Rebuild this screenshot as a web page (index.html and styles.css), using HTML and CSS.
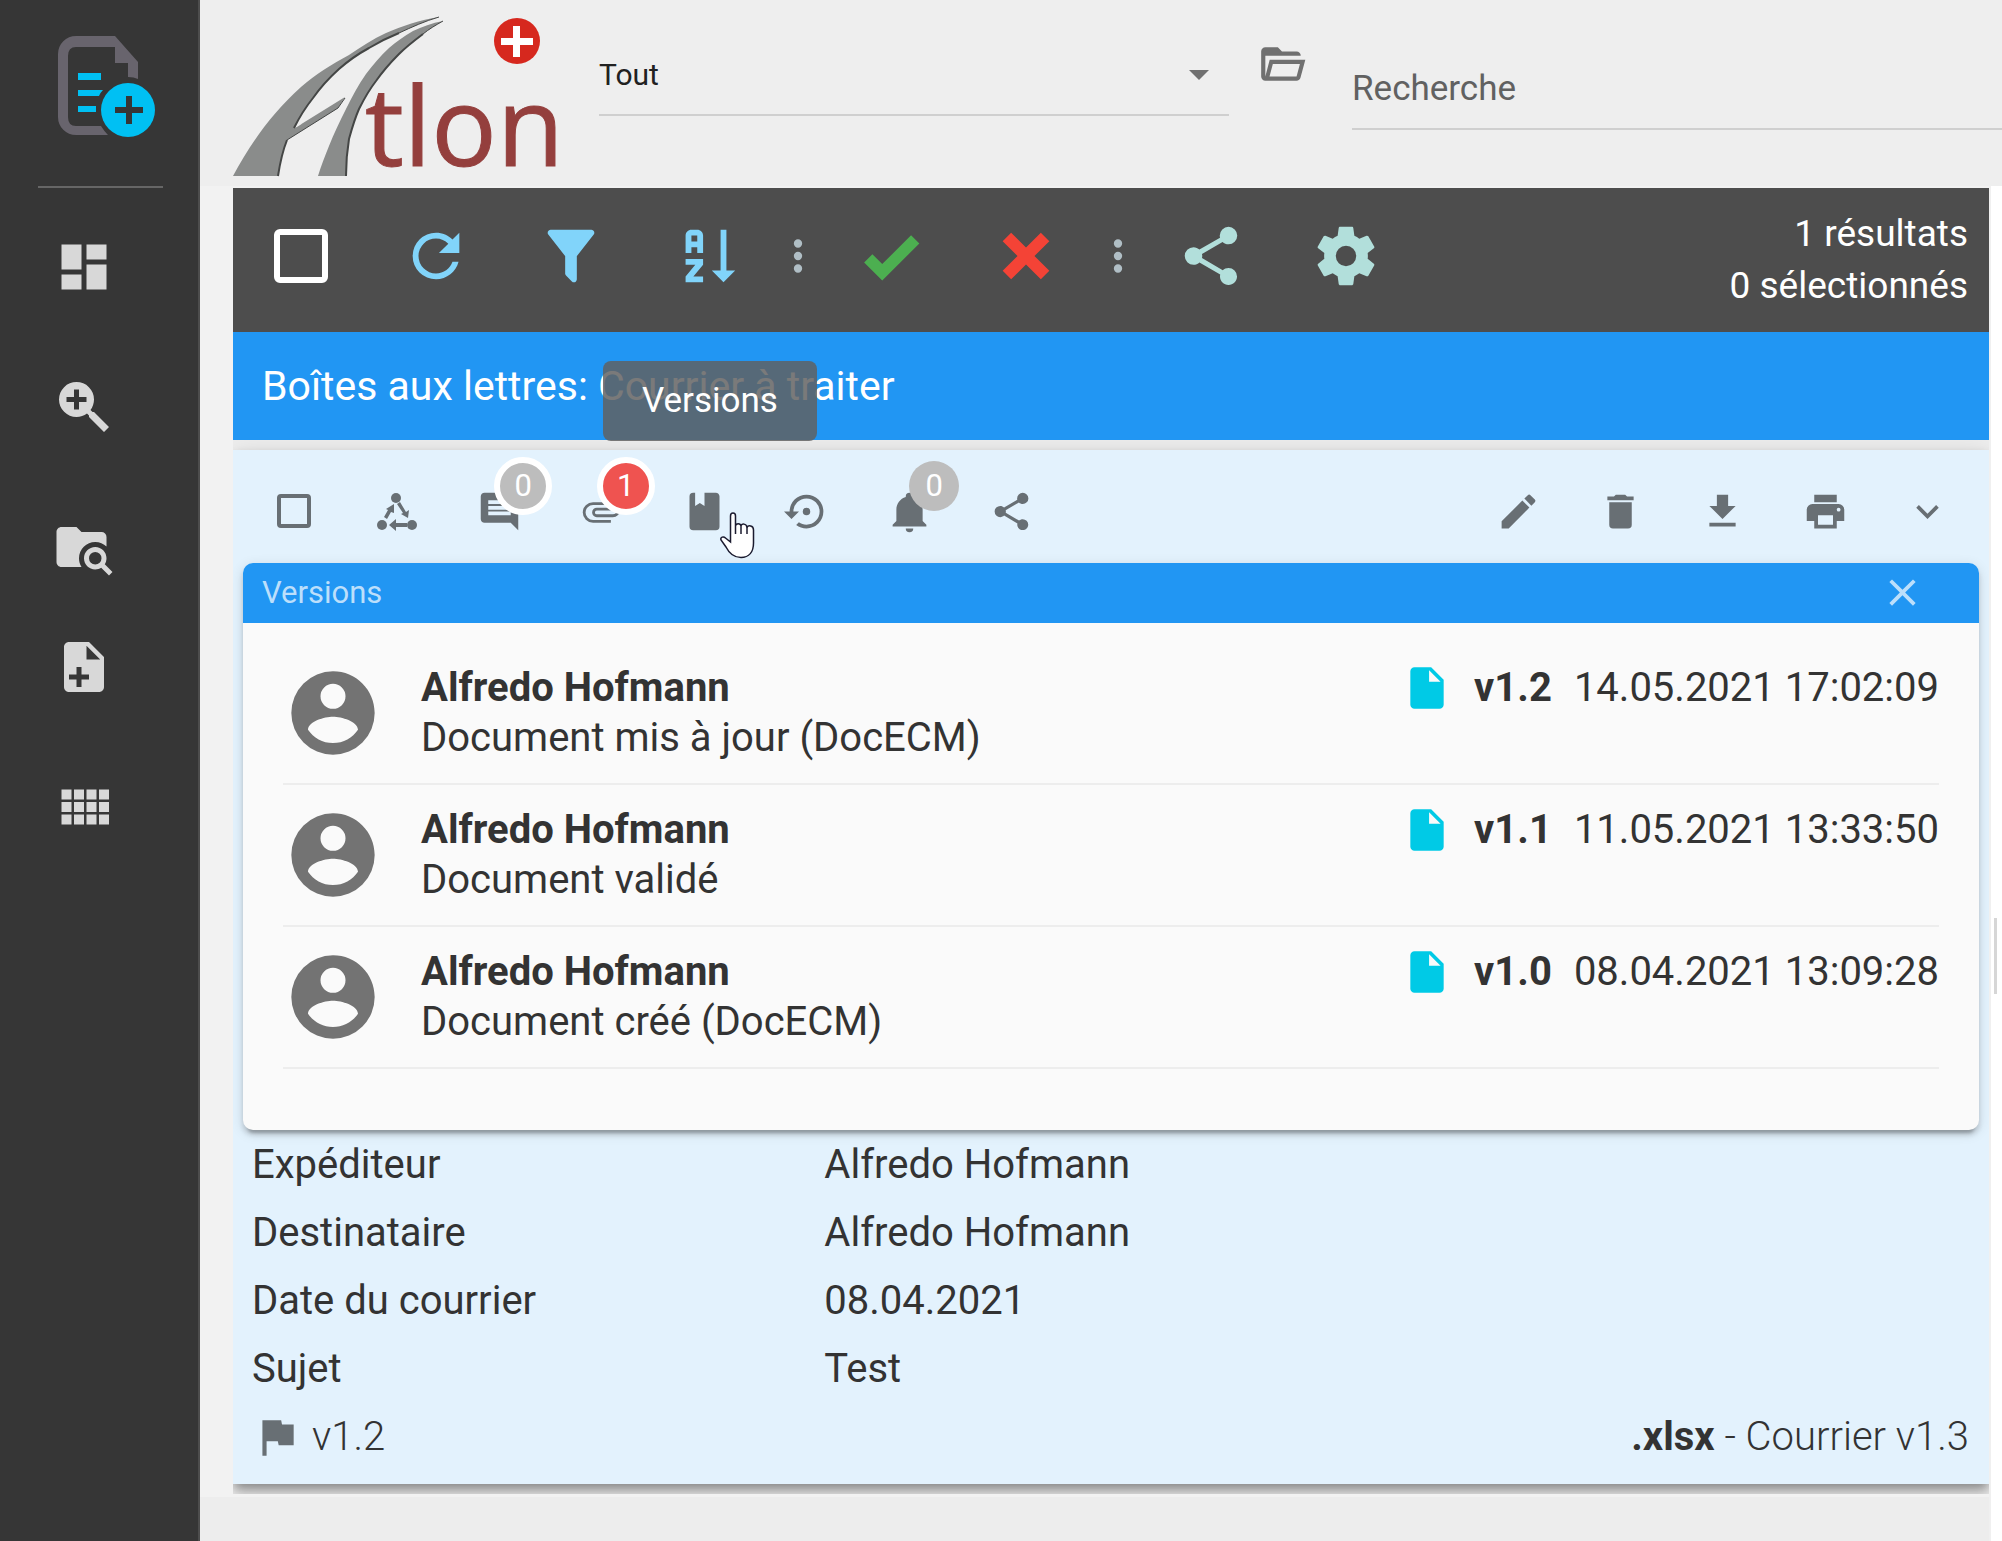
FILE: index.html
```html
<!DOCTYPE html>
<html lang="fr">
<head>
<meta charset="utf-8">
<meta name="viewport" content="width=device-width, initial-scale=1">
<title>Atlon - Boîtes aux lettres</title>
<link rel="stylesheet" href="styles.css">
</head>
<body>
<svg class="sprite" aria-hidden="true">
  <symbol id="i-share" viewBox="0 0 24 24"><path d="M18,16.08C17.24,16.08 16.56,16.38 16.04,16.85L8.91,12.7C8.96,12.47 9,12.24 9,12C9,11.76 8.96,11.53 8.91,11.3L15.96,7.19C16.5,7.69 17.21,8 18,8A3,3 0 0,0 21,5A3,3 0 0,0 18,2A3,3 0 0,0 15,5C15,5.24 15.04,5.47 15.09,5.7L8.04,9.81C7.5,9.31 6.79,9 6,9A3,3 0 0,0 3,12A3,3 0 0,0 6,15C6.79,15 7.5,14.69 8.04,14.19L15.16,18.34C15.11,18.55 15.08,18.77 15.08,19C15.08,20.61 16.39,21.91 18,21.91C19.61,21.91 20.92,20.61 20.92,19A2.92,2.92 0 0,0 18,16.08Z"/></symbol>
  <symbol id="i-dots" viewBox="0 0 24 24"><path d="M12,16A2,2 0 0,1 14,18A2,2 0 0,1 12,20A2,2 0 0,1 10,18A2,2 0 0,1 12,16M12,10A2,2 0 0,1 14,12A2,2 0 0,1 12,14A2,2 0 0,1 10,12A2,2 0 0,1 12,10M12,4A2,2 0 0,1 14,6A2,2 0 0,1 12,8A2,2 0 0,1 10,6A2,2 0 0,1 12,4Z"/></symbol>
  <symbol id="i-account" viewBox="0 0 24 24"><path d="M12,19.2C9.5,19.2 7.29,17.92 6,16C6.03,14 10,12.9 12,12.9C14,12.9 17.97,14 18,16C16.71,17.92 14.5,19.2 12,19.2M12,5A3,3 0 0,1 15,8A3,3 0 0,1 12,11A3,3 0 0,1 9,8A3,3 0 0,1 12,5M12,2A10,10 0 0,0 2,12A10,10 0 0,0 12,22A10,10 0 0,0 22,12C22,6.47 17.5,2 12,2Z"/></symbol>
  <symbol id="i-file" viewBox="0 0 24 24"><path fill-rule="evenodd" d="M13,9V3.5L18.5,9M6,2C4.89,2 4,2.89 4,4V20A2,2 0 0,0 6,22H18A2,2 0 0,0 20,20V8L14,2H6Z"/></symbol>
</svg>

<div class="app">
  <nav class="sidebar" aria-label="Navigation principale">
    <button class="app-logo" type="button" aria-label="Nouveau document">
      <svg width="98" height="102" viewBox="58 36 98 102">
        <path fill="#68646d" d="M115 36H76a18 18 0 0 0-18 18v63a18 18 0 0 0 18 18h32q-4-4-7-9H76q-8 0-8-9V56q0-9 8-9h39v16h13v14q6 0 10 2V62z"/>
        <path fill="#00c0f3" d="M78 73h23v7H78zM78 90h25q-3 3-4 6H78zM78 106h18v6H78z"/>
        <circle cx="128" cy="110" r="27" fill="#00c0f3"/>
        <path fill="#363636" d="M126 96h6v11h11v6h-11v11h-6v-11h-11v-6h11z"/>
      </svg>
    </button>
    <hr class="sidebar-rule">
    <div class="nav-items">
      <button type="button" aria-label="Tableau de bord"><svg class="icon-nav" viewBox="0 0 24 24"><path d="M13,3V9H21V3M13,21H21V11H13M3,21H11V15H3M3,13H11V3H3V13Z"/></svg></button>
      <button type="button" aria-label="Recherche avancée"><svg class="icon-nav" viewBox="0 0 24 24"><path fill-rule="evenodd" d="M9,2A7,7 0 0,1 16,9C16,10.57 15.5,12 14.61,13.19L15.41,14H16L22,20L20,22L14,16V15.41L13.19,14.61C12,15.5 10.57,16 9,16A7,7 0 0,1 2,9A7,7 0 0,1 9,2M8,5V8H5V10H8V13H10V10H13V8H10V5H8Z"/></svg></button>
      <div class="nav-pair">
        <button type="button" aria-label="Recherche dans les dossiers"><svg class="icon-nav" viewBox="0 0 24 24"><path d="M16.5,12C19,12 21,14 21,16.5C21,17.38 20.75,18.21 20.31,18.9L23.39,22L22,23.39L18.88,20.32C18.19,20.75 17.37,21 16.5,21C14,21 12,19 12,16.5C12,14 14,12 16.5,12M16.5,14A2.5,2.5 0 0,0 14,16.5A2.5,2.5 0 0,0 16.5,19A2.5,2.5 0 0,0 19,16.5A2.5,2.5 0 0,0 16.5,14M9,4L11,6H19A2,2 0 0,1 21,8V11.81C19.83,10.69 18.25,10 16.5,10A6.5,6.5 0 0,0 10,16.5C10,17.79 10.37,19 11,20H3C1.89,20 1,19.1 1,18V6C1,4.89 1.89,4 3,4H9Z"/></svg></button>
        <button type="button" aria-label="Ajouter un fichier"><svg class="icon-nav" viewBox="0 0 24 24"><path fill-rule="evenodd" d="M14,2H6C4.89,2 4,2.89 4,4V20C4,21.11 4.89,22 6,22H18C19.11,22 20,21.11 20,20V8L14,2M13,9V3.5L18.5,9H13M11,15V12H9V15H6V17H9V20H11V17H14V15H11Z"/></svg></button>
      </div>
      <button type="button" aria-label="Applications"><svg class="icon-nav" viewBox="0 0 24 24"><path d="M3 9h4V5H3v4zm0 5h4v-4H3v4zm5 0h4v-4H8v4zm5 0h4v-4h-4v4zM8 9h4V5H8v4zm5-4v4h4V5h-4zm5 9h4v-4h-4v4zM3 19h4v-4H3v4zm5 0h4v-4H8v4zm5 0h4v-4h-4v4zm5 0h4v-4h-4v4zm0-14v4h4V5h-4z"/></svg></button>
    </div>
  </nav>

  <div class="page">
    <header class="header">
      <svg class="brand" width="326" height="162" viewBox="233 16 326 162" role="img" aria-label="Atlon">
        <g fill="#8a8c8b">
          <path d="M233 176C250 144 272 113 301 87C316 74 332 64 349 55C361 47 373 39 386 33C402 26 420 20 439 17C425 21 412 27 399 33C389 37 379 42 369 48C358 54 348 61 339 69C329 78 320 88 313 98C305 108 299 118 294 128C296 128 300 125 303 123L345 97L338 108L287 140C283 150 280 163 278 176z"/>
          <path d="M318 176C321 166 325 156 329 146C334 133 340 121 346 109C352 97 358 85 366 74C373 65 380 56 389 48C396 42 404 36 413 31C422 27 432 23 443 21C436 25 429 29 423 34C415 40 407 46 399 54C391 62 383 71 376 81C369 90 364 99 359 109C355 118 352 128 349 139C347 151 346 164 346 176z"/>
        </g>
        <g fill="none" stroke="#444645" stroke-width="2">
          <path stroke-width="1" d="M439 17C425 21 412 27 399 33"/>
          <path d="M399 33C389 37 379 42 369 48C358 54 348 61 339 69C329 78 320 88 313 98C305 108 299 118 294 128"/>
          <path stroke-width="1" d="M345 98L338 108L287 140"/>
          <path d="M287 140C283 150 280 163 278 176"/>
          <path stroke-width="1" d="M443 21C436 25 429 29 423 34"/>
          <path d="M423 34C415 40 407 46 399 54C391 62 383 71 376 81C369 90 364 99 359 109C355 118 352 128 349 139C347 151 346 164 346 176"/>
        </g>
        <text class="brand-text" x="365" y="166">tlon</text>
        <circle cx="517" cy="41" r="23" fill="#d6281e"/>
        <path fill="#fff" d="M513 26h7v12h13v7h-13v12h-7V45h-12v-7h12z"/>
      </svg>
      <div class="select-field">
        <select aria-label="Domaine de recherche"><option>Tout</option></select>
        <span class="caret"></span>
      </div>
      <button class="folder-button" type="button" aria-label="Ouvrir un dossier"><svg class="icon-mid" viewBox="0 0 24 24"><path d="M6.1,10L4,18V8H21A2,2 0 0,0 19,6H12L10,4H4A2,2 0 0,0 2,6V18A2,2 0 0,0 4,20H19C19.9,20 20.7,19.4 20.9,18.5L23.2,10H6.1M19,18H6L7.6,12H20.6L19,18Z"/></svg></button>
      <input class="search-field" type="text" placeholder="Recherche" aria-label="Recherche">
    </header>

    <div class="workspace">
      <main class="content">
        <section class="mailbox">
          <div class="toolbar">
            <span class="tool"><input class="check check-large" type="checkbox" aria-label="Tout sélectionner"></span>
            <button class="tool sky" type="button" aria-label="Actualiser"><svg class="icon-large" viewBox="0 0 24 24"><path d="M17.65,6.35C16.2,4.9 14.21,4 12,4A8,8 0 0,0 4,12A8,8 0 0,0 12,20C15.73,20 18.84,17.45 19.73,14H17.65C16.83,16.33 14.61,18 12,18A6,6 0 0,1 6,12A6,6 0 0,1 12,6C13.66,6 15.14,6.69 16.22,7.78L13,11H20V4L17.65,6.35Z"/></svg></button>
            <button class="tool sky" type="button" aria-label="Filtrer"><svg class="icon-large" viewBox="0 0 24 24"><path d="M14,12V19.88C14.04,20.18 13.94,20.5 13.71,20.71C13.32,21.1 12.69,21.1 12.3,20.71L10.29,18.7C10.06,18.47 9.96,18.16 10,17.87V12H9.97L4.21,4.62C3.87,4.19 3.95,3.56 4.38,3.22C4.57,3.08 4.78,3 5,3V3H19V3C19.22,3 19.43,3.08 19.62,3.22C20.05,3.56 20.13,4.19 19.79,4.62L14.03,12H14Z"/></svg></button>
            <button class="tool sky" type="button" aria-label="Trier"><svg class="icon-large" viewBox="0 0 24 24"><path d="M19 17H22L18 21L14 17H17V3H19V17M11 13V15L7.67 19H11V21H5V19L8.33 15H5V13H11M9 3H7C5.9 3 5 3.9 5 5V11H7V9H9V11H11V5C11 3.9 10.11 3 9 3M9 7H7V5H9V7Z"/></svg></button>
            <svg class="icon-mid separator"><use href="#i-dots"/></svg>
            <button class="tool green" type="button" aria-label="Valider"><svg class="icon-large" viewBox="0 0 24 24"><path d="M9,20.42L2.79,14.21L5.62,11.38L9,14.77L18.88,4.88L21.71,7.71L9,20.42Z"/></svg></button>
            <button class="tool red" type="button" aria-label="Refuser"><svg class="icon-large" viewBox="0 0 24 24"><path d="M20 6.91L17.09 4L12 9.09L6.91 4L4 6.91L9.09 12L4 17.09L6.91 20L12 14.91L17.09 20L20 17.09L14.91 12L20 6.91Z"/></svg></button>
            <svg class="icon-mid separator"><use href="#i-dots"/></svg>
            <button class="tool mint" type="button" aria-label="Partager"><svg class="icon-large"><use href="#i-share"/></svg></button>
            <button class="tool mint" type="button" aria-label="Paramètres"><svg class="icon-large" viewBox="0 0 24 24"><path d="M12,15.5A3.5,3.5 0 0,1 8.5,12A3.5,3.5 0 0,1 12,8.5A3.5,3.5 0 0,1 15.5,12A3.5,3.5 0 0,1 12,15.5M19.43,12.97C19.47,12.65 19.5,12.33 19.5,12C19.5,11.67 19.47,11.34 19.43,11L21.54,9.37C21.73,9.22 21.78,8.95 21.66,8.73L19.66,5.27C19.54,5.05 19.27,4.96 19.05,5.05L16.56,6.05C16.04,5.66 15.5,5.32 14.87,5.07L14.5,2.42C14.46,2.18 14.25,2 14,2H10C9.75,2 9.54,2.18 9.5,2.42L9.13,5.07C8.5,5.32 7.96,5.66 7.44,6.05L4.95,5.05C4.73,4.96 4.46,5.05 4.34,5.27L2.34,8.73C2.21,8.95 2.27,9.22 2.46,9.37L4.57,11C4.53,11.34 4.5,11.67 4.5,12C4.5,12.33 4.53,12.65 4.57,12.97L2.46,14.63C2.27,14.78 2.21,15.05 2.34,15.27L4.34,18.73C4.46,18.95 4.73,19.03 4.95,18.95L7.44,17.94C7.96,18.34 8.5,18.68 9.13,18.93L9.5,21.58C9.54,21.82 9.75,22 10,22H14C14.25,22 14.46,21.82 14.5,21.58L14.87,18.93C15.5,18.67 16.04,18.34 16.56,17.94L19.05,18.95C19.27,19.03 19.54,18.95 19.66,18.73L21.66,15.27C21.78,15.05 21.73,14.78 21.54,14.63L19.43,12.97Z"/></svg></button>
            <p class="counts">1 résultats<br>0 sélectionnés</p>
          </div>

          <h1 class="mailbox-title">Boîtes aux lettres: Courrier à traiter<span class="tooltip" role="tooltip">Versions</span></h1>

          <div class="documents">
            <article class="document">
              <div class="actions">
                <div class="actions-left">
                  <span class="action"><input class="check check-small" type="checkbox" aria-label="Sélectionner"></span>
                  <button class="action" type="button" aria-label="Processus"><svg class="icon-small" viewBox="0 0 45 45"><circle cx="22" cy="9" r="5"/><circle cx="8" cy="36" r="5"/><circle cx="38" cy="36" r="5"/><path d="M10 28L14 21L12 20L20 15L20 24L17 23L13 30zM26 13L32 23L35 21L34 29L27 25L29 24L23 15zM33 34H22V30L15 36L22 42V38H33z"/></svg></button>
                  <button class="action" type="button" aria-label="Commentaires"><svg class="icon-small" viewBox="0 0 24 24"><path d="M21.99 4c0-1.1-.89-2-1.99-2H4c-1.1 0-2 .9-2 2v12c0 1.1.9 2 2 2h14l4 4-.01-18zM18 14H6v-2h12v2zm0-3H6V9h12v2zm0-3H6V6h12v2z"/></svg><span class="badge badge-ringed">0</span></button>
                  <button class="action" type="button" aria-label="Pièces jointes"><svg class="icon-small" viewBox="0 0 24 24"><path d="M7.5,18A5.5,5.5 0 0,1 2,12.5A5.5,5.5 0 0,1 7.5,7H18A4,4 0 0,1 22,11A4,4 0 0,1 18,15H9.5A2.5,2.5 0 0,1 7,12.5A2.5,2.5 0 0,1 9.5,10H17V11.5H9.5A1,1 0 0,0 8.5,12.5A1,1 0 0,0 9.5,13.5H18A2.5,2.5 0 0,0 20.5,11A2.5,2.5 0 0,0 18,8.5H7.5A4,4 0 0,0 3.5,12.5A4,4 0 0,0 7.5,16.5H17V18H7.5Z"/></svg><span class="badge badge-ringed badge-alert">1</span></button>
                  <button class="action" type="button" aria-label="Versions"><svg class="icon-small" viewBox="0 0 24 24"><path d="M18,22A2,2 0 0,0 20,20V4C20,2.89 19.1,2 18,2H12V9L9.5,7.5L7,9V2H6A2,2 0 0,0 4,4V20A2,2 0 0,0 6,22H18Z"/></svg>
                    <svg class="pointer" width="36" height="48" viewBox="0 0 36 48"><path d="M10.500 30V4C10.500 0 15.500 0 15.500 4V14C16 11 20.500 11 21 14C21.500 11 26.500 11.500 27 15.500C28 13 33.500 13 33.500 18V31C33.500 40 29 45.500 21 45.500C13 45.500 9 41 6 35L1 28C0 25 3.500 24 5.500 26z" fill="#fff" stroke="#1b1b2f" stroke-width="1.500"/><path d="M15.500 14v8M21 14v8M27 15v7" fill="none" stroke="#1b1b2f" stroke-width="1.500"/></svg></button>
                  <button class="action" type="button" aria-label="Historique"><svg class="icon-small" viewBox="0 0 24 24"><path d="M12,3A9,9 0 0,0 3,12H0L4,16L8,12H5A7,7 0 0,1 12,5A7,7 0 0,1 19,12A7,7 0 0,1 12,19C10.5,19 9.09,18.5 7.94,17.7L6.5,19.14C8.04,20.3 9.94,21 12,21A9,9 0 0,0 21,12A9,9 0 0,0 12,3M14,12A2,2 0 0,0 12,10A2,2 0 0,0 10,12A2,2 0 0,0 12,14A2,2 0 0,0 14,12Z"/></svg></button>
                  <button class="action" type="button" aria-label="Notifications"><svg class="icon-small" viewBox="0 0 24 24"><path d="M21,19V20H3V19L5,17V11C5,7.9 7.03,5.17 10,4.29C10,4.19 10,4.1 10,4A2,2 0 0,1 12,2A2,2 0 0,1 14,4C14,4.1 14,4.19 14,4.29C16.97,5.17 19,7.9 19,11V17L21,19M14,21A2,2 0 0,1 12,23A2,2 0 0,1 10,21"/></svg><span class="badge">0</span></button>
                  <button class="action" type="button" aria-label="Partager"><svg class="icon-small"><use href="#i-share"/></svg></button>
                </div>
                <div class="actions-right">
                  <button class="action" type="button" aria-label="Modifier"><svg class="icon-small" viewBox="0 0 24 24"><path d="M20.71,7.04C21.1,6.65 21.1,6 20.71,5.63L18.37,3.29C18,2.9 17.35,2.9 16.96,3.29L15.12,5.12L18.87,8.87M3,17.25V21H6.75L17.81,9.93L14.06,6.18L3,17.25Z"/></svg></button>
                  <button class="action" type="button" aria-label="Supprimer"><svg class="icon-small" viewBox="0 0 24 24"><path d="M19,4H15.5L14.5,3H9.5L8.5,4H5V6H19M6,19A2,2 0 0,0 8,21H16A2,2 0 0,0 18,19V7H6V19Z"/></svg></button>
                  <button class="action" type="button" aria-label="Télécharger"><svg class="icon-small" viewBox="0 0 24 24"><path d="M5,20H19V18H5M19,9H15V3H9V9H5L12,16L19,9Z"/></svg></button>
                  <button class="action" type="button" aria-label="Imprimer"><svg class="icon-small" viewBox="0 0 24 24"><path d="M18,3H6V7H18M19,12A1,1 0 0,1 18,11A1,1 0 0,1 19,10A1,1 0 0,1 20,11A1,1 0 0,1 19,12M16,19H8V14H16M19,8H5A3,3 0 0,0 2,11V17H6V21H18V17H22V11A3,3 0 0,0 19,8Z"/></svg></button>
                  <button class="action" type="button" aria-label="Déplier"><svg class="icon-small" viewBox="0 0 24 24"><path d="M7.41,8.58L12,13.17L16.59,8.58L18,10L12,16L6,10L7.41,8.58Z"/></svg></button>
                </div>
              </div>

              <section class="versions">
                <div class="versions-header">
                  <h2>Versions</h2>
                  <button type="button" aria-label="Fermer"><svg class="icon-small" viewBox="0 0 24 24"><path d="M19,6.41L17.59,5L12,10.59L6.41,5L5,6.41L10.59,12L5,17.59L6.41,19L12,13.41L17.59,19L19,17.59L13.41,12L19,6.41Z"/></svg></button>
                </div>
                <ul class="version-list">
                  <li>
                    <svg class="avatar"><use href="#i-account"/></svg>
                    <p class="version-text"><b>Alfredo Hofmann</b><br>Document mis à jour (DocECM)</p>
                    <div class="version-meta"><svg class="icon-mid"><use href="#i-file"/></svg><b>v1.2</b><time>14.05.2021 17:02:09</time></div>
                  </li>
                  <li>
                    <svg class="avatar"><use href="#i-account"/></svg>
                    <p class="version-text"><b>Alfredo Hofmann</b><br>Document validé</p>
                    <div class="version-meta"><svg class="icon-mid"><use href="#i-file"/></svg><b>v1.1</b><time>11.05.2021 13:33:50</time></div>
                  </li>
                  <li>
                    <svg class="avatar"><use href="#i-account"/></svg>
                    <p class="version-text"><b>Alfredo Hofmann</b><br>Document créé (DocECM)</p>
                    <div class="version-meta"><svg class="icon-mid"><use href="#i-file"/></svg><b>v1.0</b><time>08.04.2021 13:09:28</time></div>
                  </li>
                </ul>
              </section>

              <dl class="properties">
                <dt>Expéditeur</dt><dd>Alfredo Hofmann</dd>
                <dt>Destinataire</dt><dd>Alfredo Hofmann</dd>
                <dt>Date du courrier</dt><dd>08.04.2021</dd>
                <dt>Sujet</dt><dd>Test</dd>
              </dl>
              <footer class="document-footer">
                <svg class="icon-mid" viewBox="0 0 24 24"><path d="M14.4,6L14,4H5V21H7V14H12.4L12.8,16H20V6H14.4Z"/></svg>
                <span>v1.2</span>
                <span class="file-type"><b>.xlsx</b> - Courrier v1.3</span>
              </footer>
            </article>
          </div>
        </section>
      </main>
      <div class="scroll-track"><span class="scroll-thumb"></span></div>
    </div>
  </div>
</div>
</body>
</html>
```
FILE: styles.css
```css
* {
  box-sizing: border-box;
}

body {
  margin: 0;
  font-family: Roboto, "Liberation Sans", sans-serif;
  font-size: 40px;
  color: #333;
  background: #ededed;
}

h1, h2, p, dl, dd, ul {
  margin: 0;
  padding: 0;
  font-weight: 400;
}

button {
  display: block;
  margin: 0;
  padding: 0;
  border: 0;
  background: none;
  color: inherit;
  font: inherit;
  cursor: pointer;
}

svg {
  display: block;
  flex: none;
  fill: currentColor;
}

.sprite {
  position: absolute;
  width: 0;
  height: 0;
}

.icon-nav { width: 60px; height: 60px; }
.icon-large { width: 70px; height: 70px; }
.icon-mid { width: 50px; height: 50px; }
.icon-small { width: 45px; height: 45px; }

.app {
  display: flex;
  min-height: 100vh;
}

/* Sidebar */
.sidebar {
  flex: none;
  width: 200px;
  padding-top: 36px;
  border-right: 2px solid #4d4d4d;
  background: #363636;
  color: #d8d8d8;
}

.app-logo {
  margin-left: 58px;
}

.sidebar-rule {
  height: 2px;
  margin: 48px 35px 49px 38px;
  border: 0;
  background: #666;
}

.nav-items {
  display: grid;
  gap: 80px;
  padding-left: 54px;
}

.nav-pair {
  display: grid;
  gap: 60px;
}

/* Header */
.page {
  display: flex;
  flex: 1;
  flex-direction: column;
  min-width: 0;
}

.header {
  display: flex;
  align-items: flex-start;
  height: 186px;
  padding: 16px 0 0 33px;
  background: #eee;
}

.brand {
  margin-right: 40px;
  overflow: visible;
}

.brand-text {
  font-family: "Open Sans", "Noto Sans", sans-serif;
  font-size: 109px;
  fill: #943f3d;
  stroke: #943f3d;
  stroke-width: 1px;
}

.select-field {
  position: relative;
  flex: 63 1 0;
  min-width: 0;
  border-bottom: 2px solid #cfcfcf;
}

.select-field select {
  display: block;
  width: 100%;
  height: 98px;
  padding: 18px 40px 0 0;
  border: 0;
  background: none;
  color: #212121;
  font: inherit;
  font-size: 30px;
  appearance: none;
}

.caret {
  position: absolute;
  top: 54px;
  right: 20px;
  border: 10px solid transparent;
  border-top-color: #707070;
  border-bottom: 0;
  pointer-events: none;
}

.folder-button {
  margin: 23px 45px 0 28px;
  color: #707070;
}

.search-field {
  flex: 65 1 0;
  min-width: 0;
  height: 114px;
  padding: 32px 0 0;
  border: 0;
  border-bottom: 2px solid #cfcfcf;
  border-radius: 0;
  background: none;
  font: inherit;
  font-size: 35px;
}

.search-field::placeholder {
  color: #616161;
  opacity: 1;
}

/* Workspace */
.workspace {
  display: flex;
  flex: 1;
}

.content {
  flex: 1;
  min-width: 0;
  border-right: 2px solid #f0f0f0;
}

.mailbox {
  padding: 2px 0 3px 33px;
  background: #f2f2f2;
}

.scroll-track {
  position: relative;
  flex: none;
  width: 11px;
  background: #fff;
}

.scroll-thumb {
  position: absolute;
  top: 54%;
  right: 5px;
  width: 3px;
  height: 76px;
  background: #d6d6d6;
}

.toolbar {
  display: flex;
  align-items: center;
  height: 144px;
  padding-right: 21px;
  background: #4d4d4d;
}

.tool,
.separator {
  margin-bottom: 8px;
}

.tool {
  display: grid;
  flex: none;
  place-items: center;
  width: 135px;
  height: 100px;
}

.sky { color: #81d4fa; }
.green { color: #4caf50; }
.red { color: #f44336; }
.mint { color: #b2dfdb; }
.separator { color: #b0bec5; }

.check {
  margin: 0;
  border-style: solid;
  appearance: none;
}

.check-large {
  width: 54px;
  height: 54px;
  border-width: 6px;
  border-radius: 6px;
  border-color: #fff;
}

.check-small {
  width: 34px;
  height: 34px;
  border-width: 4px;
  border-radius: 4px;
  border-color: #686f74;
}

.counts {
  flex: 1;
  color: #fff;
  font-size: 37px;
  line-height: 52px;
  text-align: right;
}

.mailbox-title {
  position: relative;
  height: 108px;
  padding-left: 29px;
  background: #2196f3;
  color: #fff;
  font-size: 41px;
  line-height: 108px;
}

.tooltip {
  position: absolute;
  z-index: 2;
  top: 29px;
  left: 370px;
  padding: 0 39px;
  border-radius: 8px;
  background: rgba(97, 97, 97, 0.84);
  font-size: 35px;
  line-height: 80px;
}

/* Document card */
.documents {
  padding: 10px 0;
  overflow: hidden;
  background: #eee;
}

.document {
  background: #e3f2fd;
  box-shadow: 0 5px 10px -2px rgba(0, 0, 0, 0.3), 0 10px 12px 0 rgba(0, 0, 0, 0.16), 0 2px 25px 0 rgba(0, 0, 0, 0.1);
}

.actions {
  display: flex;
  justify-content: space-between;
  padding: 9px 10px 0;
  color: #686f74;
}

.actions-left,
.actions-right {
  display: grid;
  grid-auto-flow: column;
  grid-auto-columns: 1fr;
}

.actions-left { width: 820px; }
.actions-right { width: 512px; }

.action {
  position: relative;
  display: grid;
  place-items: center;
  height: 104px;
}

.badge {
  position: absolute;
  top: 2px;
  left: 50%;
  width: 50px;
  height: 50px;
  border-radius: 50%;
  background: #bdbdbd;
  color: #fff;
  font-size: 31px;
  line-height: 50px;
}

.badge-ringed {
  top: -2px;
  width: 58px;
  height: 58px;
  margin-left: -5px;
  border: 6px solid #fff;
  line-height: 46px;
}

.badge-alert {
  background: #ef5350;
}

.pointer {
  position: absolute;
  z-index: 1;
  top: 53px;
  left: 67px;
}

/* Versions panel */
.versions {
  position: relative;
  margin: 0 10px;
  border-radius: 10px;
  background: #fafafa;
  box-shadow: 0 8px 3px -5px rgba(0, 0, 0, 0.2), 0 5px 5px 0 rgba(0, 0, 0, 0.14), 0 3px 13px 0 rgba(0, 0, 0, 0.12);
}

.versions-header {
  display: flex;
  align-items: center;
  justify-content: space-between;
  height: 60px;
  padding: 0 54px 2px 19px;
  border-radius: 10px 10px 0 0;
  background: #2196f3;
  color: #bcdffb;
}

.versions-header h2 {
  font-size: 31px;
}

.version-list {
  padding: 20px 40px 61px;
  list-style: none;
}

.version-list li {
  display: flex;
  padding: 20px 0;
  border-bottom: 2px solid #ededed;
  line-height: 50px;
}

.avatar {
  width: 100px;
  height: 100px;
  color: #737373;
}

.version-text {
  flex: 1;
  padding-left: 38px;
}

.version-meta {
  display: flex;
  gap: 22px;
  height: 50px;
}

.version-meta svg {
  color: #00cae6;
}

/* Properties */
.properties {
  display: grid;
  grid-template-columns: 1fr 2fr;
  padding: 1px 20px 0 19px;
  line-height: 68px;
}

.document-footer {
  display: flex;
  align-items: center;
  gap: 10px;
  padding: 0 20px 13px 19px;
  font-weight: 300;
  line-height: 68px;
}

.document-footer svg {
  color: #686f74;
}

b {
  font-weight: 700;
}

.file-type {
  margin-left: auto;
}
```
